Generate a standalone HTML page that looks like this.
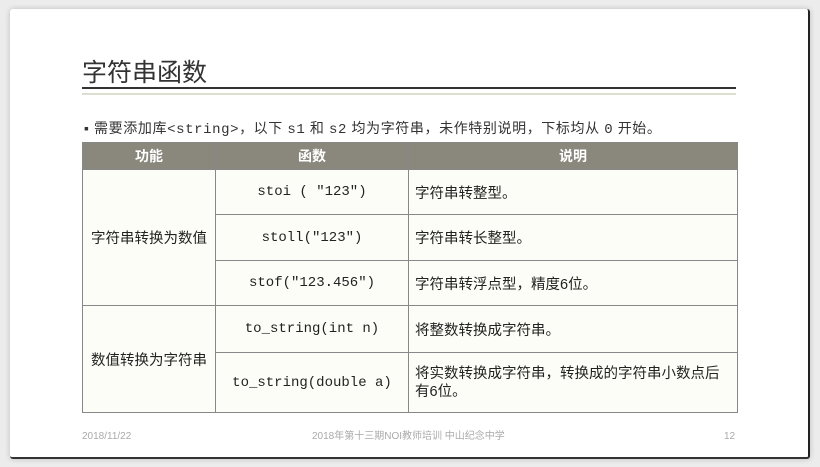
<!DOCTYPE html>
<html><head><meta charset="utf-8"><style>
body{margin:0;width:820px;height:467px;background:#ececec;font-family:"Liberation Sans","Noto Sans CJK SC",sans-serif;position:relative;overflow:hidden}
.slide{position:absolute;left:10px;top:9px;width:798px;height:448px;background:#fff;border-right:2px solid #222;border-bottom:2px solid #333;box-shadow:0 0 6px rgba(0,0,0,.2);border-radius:3px}
.abs{position:absolute}
.title{left:82px;top:53px;font-size:25px;color:#333}
.l1{left:82px;top:87px;width:654px;height:2px;background:#333}
.l2{left:82px;top:93px;width:654px;height:2px;background:#ddddd0}
.bullet{left:84px;top:118px;font-size:14px;color:#333;letter-spacing:0.6px;white-space:nowrap}
.mono{font-family:"Liberation Mono","Noto Sans CJK SC",monospace}
table{position:absolute;left:82px;top:142px;border-collapse:collapse;font-size:14.5px;color:#222;table-layout:fixed;width:655px}
td,th{border:1px solid #888;padding:0 6px}
th{background:#8a877c;color:#fff;height:26px;font-weight:bold;font-size:14px}
td{background:#fdfdf8}
td.mono{font-size:14px}
.c{text-align:center}
.foot{top:431px;font-size:10px;color:#aaa;line-height:12px}
</style></head><body>
<div class="slide"></div>
<div class="abs title">字符串函数</div>
<div class="abs l1"></div><div class="abs l2"></div>
<div class="abs bullet">▪ 需要添加库<span class="mono">&lt;string&gt;</span>，以下 <span class="mono">s1</span> 和 <span class="mono">s2</span> 均为字符串，未作特别说明，下标均从 <span class="mono">0</span> 开始。</div>
<table>
<colgroup><col style="width:133px"><col style="width:193px"><col style="width:329px"></colgroup>
<tr><th>功能</th><th>函数</th><th>说明</th></tr>
<tr style="height:45px"><td class="c" rowspan="3">字符串转换为数值</td><td class="c mono">stoi ( "123")</td><td>字符串转整型。</td></tr>
<tr style="height:46px"><td class="c mono">stoll("123")</td><td>字符串转长整型。</td></tr>
<tr style="height:45px"><td class="c mono">stof("123.456")</td><td>字符串转浮点型，精度6位。</td></tr>
<tr style="height:47px"><td class="c" rowspan="2">数值转换为字符串</td><td class="c mono">to_string(int n)</td><td>将整数转换成字符串。</td></tr>
<tr style="height:60px"><td class="c mono">to_string(double a)</td><td style="line-height:18px">将实数转换成字符串，转换成的字符串小数点后<br>有6位。</td></tr>
</table>
<div class="abs foot" style="left:82px">2018/11/22</div>
<div class="abs foot" style="left:312px">2018年第十三期NOI教师培训 中山纪念中学</div>
<div class="abs foot" style="left:724px">12</div>
</body></html>
